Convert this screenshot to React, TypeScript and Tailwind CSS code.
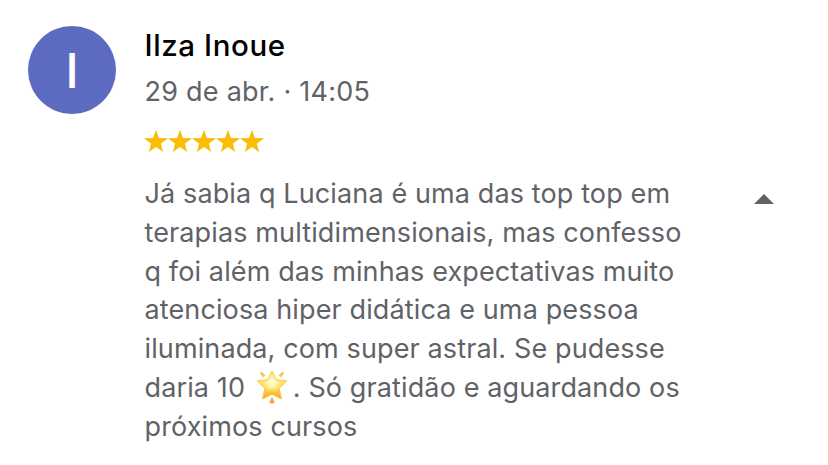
const lines = [
  "Já sabia q Luciana é uma das top top em",
  "terapias multidimensionais, mas confesso",
  "q foi além das minhas expectativas muito",
  "atenciosa hiper didática e uma pessoa",
  "iluminada, com super astral. Se pudesse",
];

function Star() {
  return (
    <svg viewBox="0 0 24 22" className="h-[22px] w-6" fill="#fbbc04">
      <path d="M12 0l2.9 8.1 9.1.2-7.2 5.5 2.5 8.2-7.3-4.9L4.7 22l2.5-8.2L0 8.3l9.1-.2z" />
    </svg>
  );
}

function GlowingStar() {
  return (
    <svg viewBox="0 0 32 34" className="mr-[5px] ml-[3px] inline-block h-[34px] w-8 align-[-7px]" aria-label="🌟">
      <defs>
        <linearGradient id="glow" x1="0" y1="0" x2="0" y2="1">
          <stop offset="0" stopColor="#ffe27a" />
          <stop offset="0.55" stopColor="#ffe04e" />
          <stop offset="1" stopColor="#fba322" />
        </linearGradient>
        <radialGradient id="shine" cx="0.5" cy="0.4" r="0.42">
          <stop offset="0" stopColor="#fffce0" />
          <stop offset="0.45" stopColor="#fff6b0" stopOpacity="0.9" />
          <stop offset="1" stopColor="#ffef80" stopOpacity="0" />
        </radialGradient>
      </defs>
      <path d="M5 1.6l4.3 3.2q-.6 1.9-2.8 2.4L4.1 2.7zM27 1.6l-4.3 3.2q.6 1.9 2.8 2.4l2.4-4.5z" fill="#fbc843" />
      <path d="M16 26.8l2.7 5.6q-2.7 2-5.4 0z" fill="#f7a326" />
      <path
        d="M16 1l4.3 8.7 10.5 1.2-7.6 7.4L25.5 29 16 24.2 6.5 29l2.3-10.7-7.6-7.4 10.5-1.2z"
        fill="url(#glow)"
        stroke="#f9bd3c"
        strokeWidth="0.8"
        strokeLinejoin="round"
      />
      <path d="M16 2.5l4 8 9 1.2-6.5 6.3 2 9L16 23l-8.5 4 2-9L3 11.7l9-1.2z" fill="url(#shine)" />
    </svg>
  );
}

export default function App() {
  return (
    <article className="flex h-[465px] w-[828px] bg-white pt-[26px] pl-7 font-['Inter',sans-serif] text-[#5f6368]">
      <div className="flex size-[88px] shrink-0 items-center justify-center rounded-full bg-[#5c6bc0] pt-0.5 text-[48px] font-medium text-white">
        I
      </div>
      <div className="ml-7 w-[580px] shrink-0 pl-[0.5px] text-[27px] tracking-[0.12px]">
        <h1 className="w-fit text-[29.5px] leading-[39px] font-medium tracking-[0.6px] text-black">Ilza Inoue</h1>
        <p className="mt-[7px] w-fit leading-10 tracking-[0.25px]">29 de abr. · 14:05</p>
        <div className="mt-[18px] -ml-[0.5px] flex">
          <Star />
          <Star />
          <Star />
          <Star />
          <Star />
        </div>
        <div className="mt-[23px] leading-[38.8px] whitespace-nowrap">
          {lines.map((line) => (
            <p key={line} className="w-fit">{line}</p>
          ))}
          <p className="h-[38.8px] w-fit">
            daria 10 <GlowingStar />. Só gratidão e aguardando os
          </p>
          <p className="w-fit">próximos cursos</p>
        </div>
      </div>
      <svg viewBox="0 0 20 10" className="mt-[168px] ml-[30px] h-2.5 w-5" fill="#5f6368">
        <path d="M0 10L10 0l10 10z" />
      </svg>
    </article>
  );
}
